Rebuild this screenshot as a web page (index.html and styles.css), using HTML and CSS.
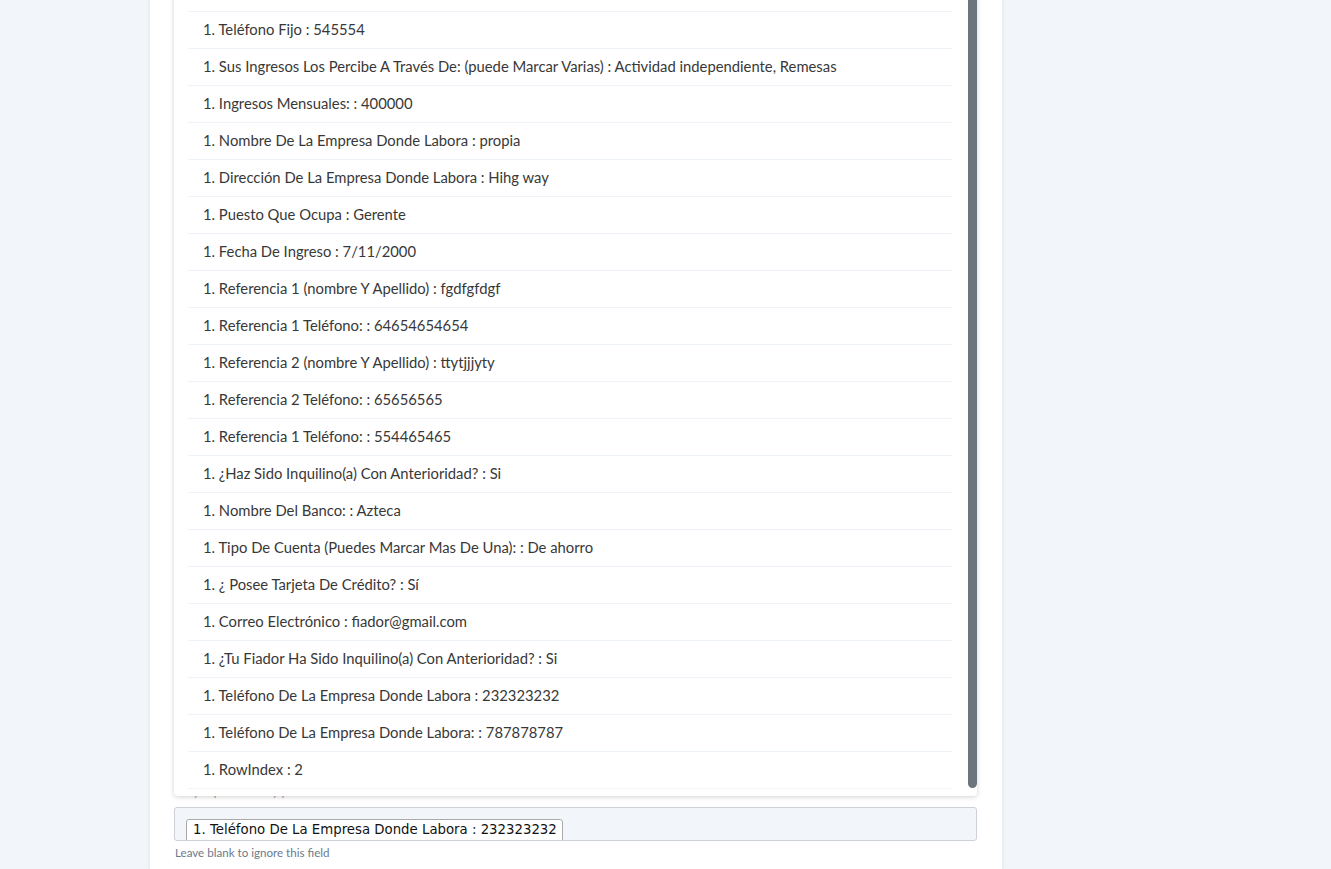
FILE: index.html
```html
<!DOCTYPE html>
<html lang="es">
<head>
    <meta charset="UTF-8">
    <meta name="viewport" content="width=device-width, initial-scale=1.0">
    <title>Exportar - Filtros</title>
    <link rel="stylesheet" href="styles.css">
</head>
<body>

<div class="card">
    <div class="field">
        <p class="help help-under">Only export rows by your filter</p>

        <div class="input-box">
            <span class="chip">1. Teléfono De La Empresa Donde Labora : 232323232</span>
        </div>
        <p class="help">Leave blank to ignore this field</p>

        <!-- open dropdown of the multi select -->
        <div class="dropdown">
            <ul class="options">
                <li>1. Teléfono Fijo : 545554</li>
                <li>1. Sus Ingresos Los Percibe A Través De: (puede Marcar Varias) : Actividad independiente, Remesas</li>
                <li>1. Ingresos Mensuales: : 400000</li>
                <li>1. Nombre De La Empresa Donde Labora : propia</li>
                <li>1. Dirección De La Empresa Donde Labora : Hihg way</li>
                <li>1. Puesto Que Ocupa : Gerente</li>
                <li>1. Fecha De Ingreso : 7/11/2000</li>
                <li>1. Referencia 1 (nombre Y Apellido) : fgdfgfdgf</li>
                <li>1. Referencia 1 Teléfono: : 64654654654</li>
                <li>1. Referencia 2 (nombre Y Apellido) : ttytjjjyty</li>
                <li>1. Referencia 2 Teléfono: : 65656565</li>
                <li>1. Referencia 1 Teléfono: : 554465465</li>
                <li>1. ¿Haz Sido Inquilino(a) Con Anterioridad? : Si</li>
                <li>1. Nombre Del Banco: : Azteca</li>
                <li>1. Tipo De Cuenta (Puedes Marcar Mas De Una): : De ahorro</li>
                <li>1. ¿ Posee Tarjeta De Crédito? : Sí</li>
                <li>1. Correo Electrónico : fiador@gmail.com</li>
                <li>1. ¿Tu Fiador Ha Sido Inquilino(a) Con Anterioridad? : Si</li>
                <li>1. Teléfono De La Empresa Donde Labora : 232323232</li>
                <li>1. Teléfono De La Empresa Donde Labora: : 787878787</li>
                <li>1. RowIndex : 2</li>
            </ul>
            <div class="scroll-thumb"></div>
        </div>
    </div>
</div>

</body>
</html>
```

FILE: styles.css
```css
body {
    font-family: Lato, "Open Sans", sans-serif;
    margin: 0;
    padding: 0;
    background-color: #f2f5f9;
    color: #333;
    overflow: hidden;
}
.card {
    background: white;
    width: 803px;
    height: 869px;
    margin-left: 150px;
    padding: 0 25px 0 24px;
    box-shadow: 0 0 4px rgba(40, 60, 90, 0.12);
    display: flex;
    flex-direction: column;
    justify-content: flex-end;
}
.field {
    position: relative;
    padding-bottom: 9px;
}
.help {
    font-size: 11.6px;
    color: #6b7a8c;
    margin: 5px 0 0 1px;
    line-height: 14px;
}
.help-under {
    margin: 0 0 8px 1px;
    color: #999;
}
.input-box {
    background: #f2f5f9;
    border: 1px solid #ccd1d7;
    border-radius: 3px;
    overflow: hidden;
    padding: 10px 0 0 11px;
    box-sizing: border-box;
    height: 34px;
}
.chip {
    display: inline-block;
    font-family: "DejaVu Sans", Verdana, sans-serif;
    font-size: 13.3px;
    color: #111;
    background: white;
    border: 1px solid #aaa;
    border-radius: 3px;
    padding: 2px 5px 6px 6px;
}
.dropdown {
    position: absolute;
    left: 0;
    right: 0;
    bottom: 73px;
    background: white;
    border-radius: 4px;
    box-shadow: 0 1px 5px rgba(0, 0, 0, 0.18);
    padding: 30px 25px 7px 14px;
}
.options {
    list-style: none;
    margin: 0;
    padding: 0;
    border-bottom: 1px solid #f1f5fa;
}
.options li {
    border-top: 1px solid #eef3f9;
    height: 34px;
    line-height: 34px;
    padding: 0 0 2px 15px;
    font-size: 14.8px;
    color: #383838;
    white-space: nowrap;
}
.scroll-thumb {
    position: absolute;
    right: 0;
    top: 0;
    bottom: 8px;
    width: 9px;
    background: #6c757d;
    border-radius: 0 0 5px 5px;
}
```
